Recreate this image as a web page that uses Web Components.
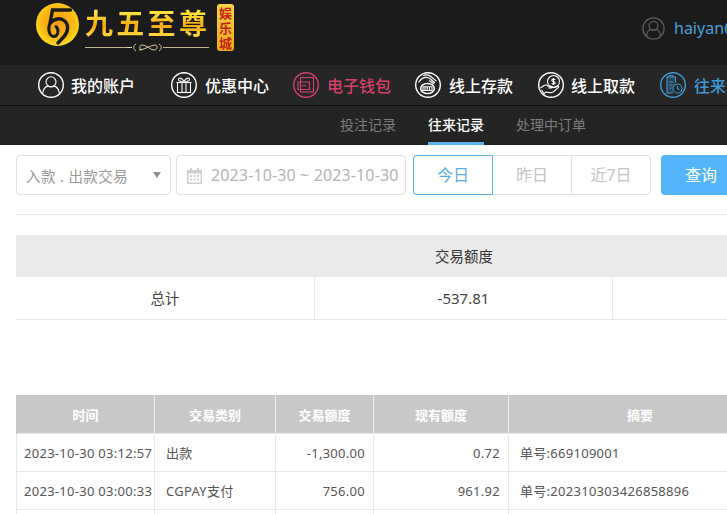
<!DOCTYPE html>
<html lang="zh-CN">
<head>
<meta charset="utf-8">
<title>往来记录</title>
<style>
    html { overflow: hidden; }
    body {
        margin: 0;
        width: 926px;
        background: #fff;
        font-family: "Noto Sans", "Noto Sans CJK SC", sans-serif;
    }
</style>
</head>
<body>
<site-header></site-header>
<main-nav>
    <nav-item icon="user" style="margin-right: 36px">我的账户</nav-item>
    <nav-item icon="gift" style="gap: 8px; margin-right: 24px">优惠中心</nav-item>
    <nav-item icon="wallet" color="#d4406c" style="gap: 8px; margin-right: 24px">电子钱包</nav-item>
    <nav-item icon="deposit" style="gap: 8px">线上存款</nav-item>
    <nav-item icon="withdraw">线上取款</nav-item>
    <nav-item icon="records" color="#3f9ad8" style="gap: 8px">往来记录</nav-item>
</main-nav>
<sub-tabs></sub-tabs>
<filter-bar></filter-bar>
<summary-table></summary-table>
<record-table></record-table>

<script>
const ICONS = {
    user: `<circle cx="13" cy="9.800" r="5"/><path d="M4.600 21.500c.6-4.600 3.400-7 5.400-7.400 1.900 1 4.100 1 6 0 2 .4 4.800 2.800 5.400 7.400"/>`,
    gift: `<rect x="6.500" y="10.500" width="13" height="10"/><path d="M5.500 10.500h15M11 10.500v10M15 10.500v10M13 10c-1-3-3.500-4.500-5-3.500s.5 3.500 5 3.500c4.500 0 6.500-2.500 5-3.500s-4 .5-5 3.500z"/>`,
    wallet: `<rect x="7.500" y="5.500" width="13" height="14.500"/><path d="M5 10h11.500v7.500H5zM8.500 13.700h5"/>`,
    deposit: `<path d="M3.500 10.500c3-4.500 7-6 10.500-4.500 2 1 3 3 6 4.800M8 3.500c3.500-1.200 6.500-.3 8.500 1.500 1.500 1.300 2.800 2.800 5 4"/><path d="M14 8.500l5 3.500"/><ellipse cx="12.500" cy="16.500" rx="6.800" ry="5" stroke-width="1.500"/><path d="M8 14.800h9v3.700H8zM10 14.800v3.700M12.200 14.800v3.700M14.500 14.800v3.700"/>`,
    withdraw: `<circle cx="15.500" cy="9.500" r="6"/><path d="M15.500 6v7M17.200 7.700c-.7-.9-3.400-.9-3.400.7 0 1.600 3.400.8 3.400 2.500 0 1.500-2.700 1.400-3.500.5"/><path d="M2.500 16l3.500-2.500c1.500-1 3-.2 4 .7h3.500c1.200 0 1.200 1.700 0 1.700h-3M14.500 15.800l4.800-1.800c1.200-.3 1.800 1 .9 1.700l-5 4.300c-2 1-5.500.5-7.500 0l-2 1.800M3.500 18l3 4.500"/>`,
    records: `<path d="M15.500 10.500V5H7v16h6" fill="#3f9ad8" fill-opacity=".25"/><path d="M9 5V3.800h4V5M9.500 10h3.500M9.500 13h3M9.500 16h2"/><circle cx="17.500" cy="16.500" r="4.500" fill="#262626"/><path d="M17.500 13.800v2.900l2 1"/>`
};

function svgIcon(name, color, size) {
    return `<svg width="${size}" height="${size}" viewBox="0 0 26 26" fill="none" stroke="${color}" stroke-width="1.100">
        <circle cx="13" cy="13" r="12.300" stroke-width="1.400"/>${ICONS[name]}</svg>`;
}

class SiteHeader extends HTMLElement {
    constructor() {
        super();
        this.attachShadow({ mode: 'open' });
        this.shadowRoot.innerHTML = `
            <style>
                :host {
                    display: flex;
                    justify-content: space-between;
                    height: 65px;
                    padding-left: 36px;
                    background: #1b1b1b;
                    box-sizing: border-box;
                }
                .logo { display: flex; align-items: flex-start; }
                .mark { margin-top: 3px; }
                .name { margin-left: 5px; width: 125px; }
                .title {
                    margin-top: 4px;
                    height: 36px;
                    font: 700 28px/36px "Noto Sans CJK SC", sans-serif;
                    letter-spacing: 3.300px;
                    white-space: nowrap;
                    background: linear-gradient(#ffe23a 25%, #f7a70c 60%, #ffd23a 85%);
                    -webkit-background-clip: text;
                    background-clip: text;
                    color: transparent;
                }
                .badge {
                    margin: 4px 0 0 7px;
                    width: 17px;
                    height: 47px;
                    border-radius: 3px;
                    background: linear-gradient(#f9d648, #f0a818);
                    color: #c4231a;
                    font: 700 13px/15px "Noto Sans CJK SC", sans-serif;
                    text-align: center;
                    padding-top: 1px;
                    box-sizing: border-box;
                }
                .user {
                    display: flex;
                    align-items: center;
                    gap: 9px;
                    width: 284px;
                    height: 56px;
                    color: #4a9fd8;
                    font-size: 16px;
                }
            </style>
            <div class="logo">
                <svg class="mark" width="44" height="43" viewBox="0 0 44 43">
                    <defs>
                        <radialGradient id="g" cx=".5" cy=".45" r=".6">
                            <stop offset="0" stop-color="#f59c10"/>
                            <stop offset=".6" stop-color="#fbb614"/>
                            <stop offset="1" stop-color="#ffe81f"/>
                        </radialGradient>
                    </defs>
                    <circle cx="21.500" cy="21.500" r="21.500" fill="url(#g)"/>
                    <g fill="none" stroke="#1b1b1b" stroke-linecap="round">
                        <path d="M34.500 7H16.500L14 20.500C18 15.500 24 14.500 28 17.500C33.500 21.500 32 29 28 33.500L22 40" stroke-width="3.400"/>
                        <path d="M14 20.500C11.500 25 13 33 17.500 33.500C22 33.500 23.500 27 20 23.500" stroke-width="3"/>
                    </g>
                </svg>
                <div class="name">
                    <div class="title">九五至尊</div>
                    <svg width="125" height="9" viewBox="0 0 125 9" style="display:block;margin-top:3px" fill="none" stroke="#e9dcae">
                        <path d="M0 4.500h47M78 4.500h46" stroke-width=".8"/>
                        <path d="M47 4.500h-5M51 1c-3 1.500-3 5.500 0 7M74 1c3 1.500 3 5.500 0 7M54 7c5 0 12-5 16-5 3 0 3 5-1 5s-7-5-12-5c-3 0-3 5 0 5" stroke-width=".9"/>
                    </svg>
                </div>
                <div class="badge">娱乐城</div>
            </div>
            <div class="user">
                <svg width="23" height="23" viewBox="0 0 26 26" fill="none" stroke="#5a5a5a" stroke-width="1.500">
                    <circle cx="13" cy="13" r="12"/>
                    <circle cx="13" cy="10" r="5"/>
                    <path d="M5 21.500c.6-4.500 3-7 5-7.400 2 1 4 1 6 0 2 .4 4.400 2.900 5 7.400"/>
                </svg>
                <span>haiyan668</span>
            </div>
        `;
    }
}

class MainNav extends HTMLElement {
    constructor() {
        super();
        this.attachShadow({ mode: 'open' });
        this.shadowRoot.innerHTML = `
            <style>
                :host {
                    display: flex;
                    height: 41px;
                    padding-left: 38px;
                    background: #262626;
                    border-bottom: 1px solid #111;
                    box-sizing: border-box;
                    white-space: nowrap;
                }
            </style>
            <slot></slot>
        `;
    }
}

class NavItem extends HTMLElement {
    constructor() {
        super();
        this.attachShadow({ mode: 'open' });
        const color = this.getAttribute('color') || '#fff';
        this.shadowRoot.innerHTML = `
            <style>
                :host {
                    display: flex;
                    flex: none;
                    align-items: center;
                    gap: 7px;
                    height: 40px;
                    margin-right: 25px;
                    color: ${color};
                    font: 500 16px "Noto Sans CJK SC", sans-serif;
                }
                svg { display: block; }
            </style>
            ${svgIcon(this.getAttribute('icon'), color, 26)}
            <slot></slot>
        `;
    }
}

class SubTabs extends HTMLElement {
    constructor() {
        super();
        this.attachShadow({ mode: 'open' });
        this.shadowRoot.innerHTML = `
            <style>
                :host {
                    display: flex;
                    gap: 32px;
                    height: 39px;
                    padding-left: 340px;
                    background: #242424;
                    box-sizing: border-box;
                    color: #7b7b7b;
                    font: 14px/37px "Noto Sans CJK SC", sans-serif;
                }
                .on {
                    color: #fff;
                    font-weight: 500;
                    border-bottom: 3px solid #5ab4f0;
                    box-sizing: border-box;
                }
            </style>
            <div>投注记录</div>
            <div class="on">往来记录</div>
            <div>处理中订单</div>
        `;
    }
}

class FilterBar extends HTMLElement {
    constructor() {
        super();
        this.attachShadow({ mode: 'open' });
        this.shadowRoot.innerHTML = `
            <style>
                :host {
                    display: flex;
                    margin: 10px 0 0 16px;
                    padding-bottom: 19px;
                    border-bottom: 1px solid #ececec;
                    color: #9a9a9a;
                    font: 14px "Noto Sans", "Noto Sans CJK SC", sans-serif;
                }
                .box {
                    display: flex;
                    flex: none;
                    align-items: center;
                    height: 40px;
                    border: 1px solid #e0e0e0;
                    border-radius: 4px;
                    box-sizing: border-box;
                }
                .select {
                    width: 155px;
                    justify-content: space-between;
                    padding: 0 9px;
                    margin-right: 5px;
                    font-size: 14.500px;
                    letter-spacing: .4px;
                }
                .arrow {
                    border: 4px solid transparent;
                    border-top: 6px solid #8f8f8f;
                    border-bottom: 0;
                }
                .date {
                    width: 230px;
                    gap: 8px;
                    padding-left: 9px;
                    margin-right: 7px;
                    color: #b4b4b4;
                    font-size: 16px;
                    letter-spacing: .13px;
                    white-space: nowrap;
                }
                .tabs { width: 238px; color: #c4c4c4; font-size: 16px; }
                .tabs div { flex: 1; text-align: center; line-height: 38px; }
                .tabs .next { border-left: 1px solid #e0e0e0; }
                .tabs .on {
                    flex: none;
                    width: 80px;
                    height: 40px;
                    margin: -1px 0 -1px -1px;
                    border: 1px solid #5cb0e6;
                    border-radius: 4px 0 0 4px;
                    box-sizing: border-box;
                    color: #5aaee8;
                }
                .query {
                    flex: none;
                    width: 80px;
                    height: 40px;
                    margin-left: 10px;
                    border-radius: 4px;
                    background: #55b5fb;
                    color: #fff;
                    font-size: 16px;
                    line-height: 40px;
                    text-align: center;
                }
            </style>
            <div class="box select"><span>入款 . 出款交易</span><i class="arrow"></i></div>
            <div class="box date">
                <svg width="17" height="17" viewBox="0 0 17 17" fill="#d0d0d0">
                    <path d="M1 3h15v14H1zM2.500 6.500v9h12v-9z"/>
                    <path d="M4 1h2v3.500H4zM11 1h2v3.500h-2zM4 8h2v2H4zM7.500 8h2v2h-2zM11 8h2v2h-2zM4 11.500h2v2H4zM7.500 11.500h2v2h-2zM11 11.500h2v2h-2z"/>
                </svg>
                <span>2023-10-30 ~ 2023-10-30</span>
            </div>
            <div class="box tabs">
                <div class="on">今日</div>
                <div>昨日</div>
                <div class="next">近7日</div>
            </div>
            <div class="query">查询</div>
        `;
    }
}

class SummaryTable extends HTMLElement {
    constructor() {
        super();
        this.attachShadow({ mode: 'open' });
        this.shadowRoot.innerHTML = `
            <style>
                :host {
                    display: grid;
                    grid-template-columns: 299px 298px 297px;
                    grid-auto-rows: 42px;
                    margin: 20px 0 0 16px;
                    color: #444;
                    font: 15px/42px "Noto Sans", "Noto Sans CJK SC", sans-serif;
                    text-align: center;
                }
                .head { background: #ebebeb; color: #333; font-size: 14.500px; }
                .cell {
                    height: 43px;
                    box-sizing: border-box;
                    border-bottom: 1px solid #e8e8e8;
                    border-right: 1px solid #e8e8e8;
                }
                .cell:nth-child(4) { border-left: 1px solid #e8e8e8; }
                .sum { font-size: 14.500px; }
            </style>
            <div class="head"></div><div class="head">交易额度</div><div class="head"></div>
            <div class="cell sum">总计</div><div class="cell">-537.81</div><div class="cell"></div>
        `;
    }
}

class RecordTable extends HTMLElement {
    constructor() {
        super();
        this.attachShadow({ mode: 'open' });
        const rows = [
            ['2023-10-30 03:12:57', '出款', '-1,300.00', '0.72', '单号:669109001'],
            ['2023-10-30 03:00:33', 'CGPAY支付', '756.00', '961.92', '单号:202310303426858896'],
            ['', '', '', '', '']
        ];
        this.shadowRoot.innerHTML = `
            <style>
                :host {
                    display: block;
                    margin: 76px 0 0 16px;
                    width: 756px;
                    color: #555;
                    font: 13px "Noto Sans", "Noto Sans CJK SC", sans-serif;
                }
                table { width: 100%; table-layout: fixed; border-collapse: collapse; }
                th {
                    height: 38px;
                    padding: 0;
                    background: #c8c8c8;
                    border-right: 1px solid #eee;
                    color: #fff;
                    font-size: 13px;
                    font-weight: 700;
                }
                th:first-child { border-left: 1px solid #c8c8c8; }
                td {
                    height: 37px;
                    padding: 0 8px 0 7px;
                    border: 1px solid #e8e8e8;
                    letter-spacing: .28px;
                    white-space: nowrap;
                }
                td:nth-child(1) { padding-right: 0; }
                td:nth-child(2), td:nth-child(5) { padding-left: 11px; }
                td:nth-child(3), td:nth-child(4) { text-align: right; }
            </style>
            <table>
                <colgroup>
                    <col style="width:138px"><col style="width:121px"><col style="width:98px"><col style="width:135px"><col>
                </colgroup>
                <thead><tr><th>时间</th><th>交易类别</th><th>交易额度</th><th>现有额度</th><th>摘要</th></tr></thead>
                <tbody>${rows.map(r => `<tr>${r.map(c => `<td>${c}</td>`).join('')}</tr>`).join('')}</tbody>
            </table>
        `;
    }
}

customElements.define('site-header', SiteHeader);
customElements.define('main-nav', MainNav);
customElements.define('nav-item', NavItem);
customElements.define('sub-tabs', SubTabs);
customElements.define('filter-bar', FilterBar);
customElements.define('summary-table', SummaryTable);
customElements.define('record-table', RecordTable);
</script>
</body>
</html>
